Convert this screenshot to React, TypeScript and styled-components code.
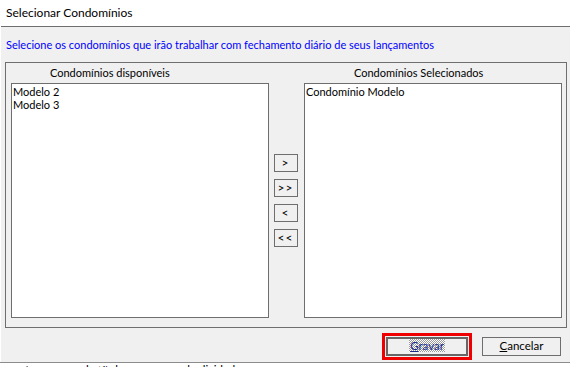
import styled, { createGlobalStyle } from "styled-components";

const GlobalStyle = createGlobalStyle`
  html, body {
    margin: 0;
    padding: 0;
    background: #ffffff;
    overflow: hidden;
  }
  body {
    font-family: Lato, "Noto Sans", sans-serif;
    font-size: 11px;
    color: #000;
  }
`;

const Window = styled.div`
  width: 570px;
  height: 367px;
  display: flex;
  flex-direction: column;
  overflow: hidden;
`;

const TitleBar = styled.div`
  flex-shrink: 0;
  height: 26px;
  display: flex;
  align-items: center;
  padding: 0 0 2px 6px;
  box-sizing: border-box;
  background: #fff;
  font-size: 12px;
`;

const Dialog = styled.div`
  flex-shrink: 0;
  height: 336px;
  box-sizing: border-box;
  background: #f0f0f0;
  border-top: 1px solid #6e6e6e;
  margin-left: 1px;
  display: flex;
  flex-direction: column;
  padding: 0 3px 0 4px;
`;

const Instruction = styled.div`
  flex-shrink: 0;
  color: #0000ff;
  padding: 11px 0 0 1px;
  height: 35px;
  line-height: 14px;
  box-sizing: border-box;
`;

const GroupBox = styled.div`
  flex-shrink: 0;
  height: 266px;
  box-sizing: border-box;
  border: 1px solid #6e6e6e;
  display: flex;
  flex-direction: column;
  padding: 0 4px 9px 5px;
`;

const Labels = styled.div`
  display: grid;
  grid-template-columns: 258px 35px 258px;
  height: 20px;
  align-items: center;
`;

const Caption = styled.div<{ $indent: number }>`
  padding-left: ${(p) => p.$indent}px;
  line-height: 14px;
  white-space: nowrap;
`;

const Lists = styled.div`
  flex: 1;
  display: grid;
  grid-template-columns: 258px 35px 258px;
`;

const ListBox = styled.div`
  background: #fff;
  border: 1px solid #6e6e6e;
  box-sizing: border-box;
  padding: 1px 1px 0;
  line-height: 13px;
`;

const Mover = styled.div`
  display: flex;
  flex-direction: column;
  align-items: center;
  gap: 7px;
  padding-top: 71px;
  padding-right: 2px;
`;

const ArrowButton = styled.button`
  width: 24px;
  height: 18px;
  box-sizing: border-box;
  border: 1px solid #6e6e6e;
  background: #f0f0f0;
  font-family: inherit;
  font-size: 12px;
  color: #000;
  padding: 0 0 1px;
  line-height: 1;
  letter-spacing: 1px;
`;

const Footer = styled.div`
  flex: 1;
  display: flex;
  justify-content: flex-end;
  align-items: flex-start;
  padding: 9px 6px 0 0;
  gap: 14px;
`;

const Button = styled.button<{ $focused?: boolean }>`
  width: ${(p) => (p.$focused ? "82px" : "79px")};
  height: 19px;
  box-sizing: border-box;
  background: #f0f0f0;
  border: ${(p) => (p.$focused ? "2px solid #666" : "1px solid #6e6e6e")};
  font-family: inherit;
  font-size: 11.5px;
  color: #000;
  padding: 0 0 1px;
  line-height: 1;
  outline: ${(p) => (p.$focused ? "3px solid #ee0000" : "none")};
  outline-offset: 1px;
`;

const FocusLabel = styled.span`
  padding: 0 1px;
  background-color: #fff;
  background-image: conic-gradient(#9a9a9a 25%, #fff 0 50%, #9a9a9a 0 75%, #fff 0);
  background-size: 2px 2px;
  color: #1a2a8a;
`;

const Key = styled.span`
  text-decoration: underline;
`;

const Behind = styled.div`
  flex: 1;
  border-top: 1px solid #8c8c8c;
  background: #fff;
  font-size: 11.5px;
  line-height: 12px;
  white-space: nowrap;
  padding-top: 1px;
`;

export default function App() {
  return (
    <>
      <GlobalStyle />
      <Window>
        <TitleBar>Selecionar Condomínios</TitleBar>
        <Dialog>
          <Instruction>
            Selecione os condomínios que irão trabalhar com fechamento diário de seus lançamentos
          </Instruction>
          <GroupBox>
            <Labels>
              <Caption $indent={39}>Condomínios disponíveis</Caption>
              <div />
              <Caption $indent={50}>Condomínios Selecionados</Caption>
            </Labels>
            <Lists>
              <ListBox>
                <div>Modelo 2</div>
                <div>Modelo 3</div>
              </ListBox>
              <Mover>
                <ArrowButton>&gt;</ArrowButton>
                <ArrowButton>&gt;&gt;</ArrowButton>
                <ArrowButton>&lt;</ArrowButton>
                <ArrowButton>&lt;&lt;</ArrowButton>
              </Mover>
              <ListBox>
                <div>Condomínio Modelo</div>
              </ListBox>
            </Lists>
          </GroupBox>
          <Footer>
            <Button $focused>
              <FocusLabel>
                <Key>G</Key>ravar
              </FocusLabel>
            </Button>
            <Button>
              <Key>C</Key>ancelar
            </Button>
          </Footer>
        </Dialog>
        <Behind>r contas a pagar de títulos pagos em duplicidade</Behind>
      </Window>
    </>
  );
}
